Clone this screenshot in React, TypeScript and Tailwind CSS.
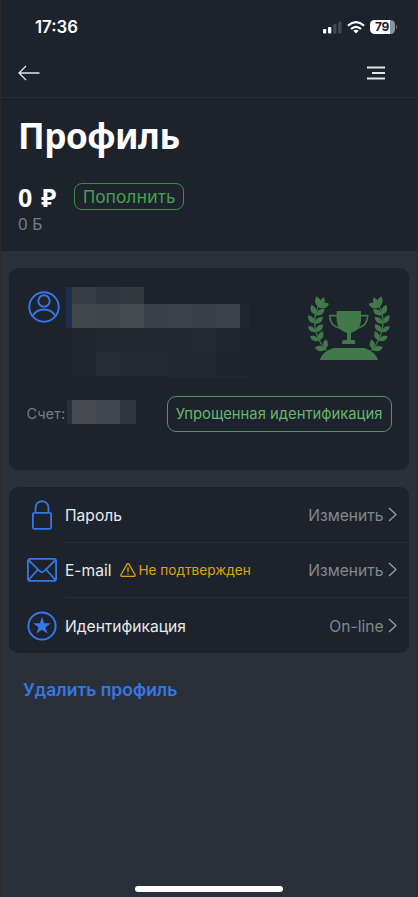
import React from 'react'

interface MenuItemProps {
    icon: React.ReactNode,
    title: string,
    action: string,
    warning?: string,
    last?: boolean,
}

// base x, base y, tip x, tip y
const leaves = [
    [90, 84, 79, 49],
    [91, 80, 102, 52],
    [88, 83, 117, 71],
    [76, 104, 64, 74],
    [77, 106, 104, 88],
    [73, 130, 54, 106],
    [74, 131, 99, 111],
    [77, 156, 54, 139],
    [77, 156, 99, 133],
    [86, 182, 60, 169],
    [86, 182, 98, 153],
    [106, 209, 74, 202],
    [105, 208, 108, 178],
]

const leafPath = ([x1, y1, x2, y2]: number[]) => {
    const dx = x2 - x1
    const dy = y2 - y1
    const mx = x1 + dx * 0.5
    const my = y1 + dy * 0.5
    const w = 0.5
    return `M${x1} ${y1}Q${mx - dy * w} ${my + dx * w} ${x2} ${y2}Q${mx + dy * w} ${my - dx * w} ${x1} ${y1}Z`
}

const Branch = () => (
    <g>
        <path d="M95 62Q72 96 74 132Q78 180 110 212" fill="none" stroke="#42794b" strokeWidth="4" />
        {leaves.map((leaf, i) => <path key={i} d={leafPath(leaf)} />)}
    </g>
)

const Trophy = () => (
    <svg width="84" height="66" viewBox="51 45 252 198" fill="#42794b">
        <Branch />
        <g transform="translate(353 0) scale(-1 1)"><Branch /></g>
        <path d="M140 93H213V122Q211 151 183 159V180H193Q196 181 196 192H156Q156 181 160 180H171V159Q143 151 140 122Z" />
        <path d="M142 107H119Q120 138 151 145M211 107H233Q232 138 201 145" fill="none" stroke="#42794b" strokeWidth="5" />
        <path d="M89 240Q98 214 130 204H223Q255 214 264 240Z" />
    </svg>
)

const UserIcon = () => (
    <svg width="32" height="32" viewBox="0 0 32 32" fill="none" stroke="#3677e6" strokeWidth="1.9">
        <circle cx="16" cy="16" r="14.7" />
        <circle cx="16" cy="10" r="5.7" />
        <path d="M4.5 25C9.500 16.300 22.500 16.300 27.500 25" />
    </svg>
)

const LockIcon = () => (
    <svg width="20" height="30" viewBox="0 0 20 30" fill="none" stroke="#3677e6" strokeWidth="1.8">
        <rect x="0.900" y="12.800" width="18.200" height="16" rx="1.200" />
        <path d="M3.500 12.800V8.200C3.500 -1.100 16.500 -1.100 16.500 8.200V12.800" />
    </svg>
)

const MailIcon = () => (
    <svg width="30" height="24" viewBox="0 0 30 24" fill="none" stroke="#3677e6" strokeWidth="1.8" strokeLinejoin="round">
        <rect x="0.900" y="0.900" width="28.200" height="22" rx="2.200" />
        <path d="M1.500 2L12.500 12.800Q15 15.200 17.500 12.800L28.500 2M1.500 22L11 11.500M28.500 22L19 11.500" />
    </svg>
)

const StarIcon = () => (
    <svg width="30" height="30" viewBox="0 0 30 30">
        <circle cx="15" cy="15" r="13.600" fill="none" stroke="#3677e6" strokeWidth="2" />
        <path d="M15 5.800L17.200 12.200H23.900L18.500 16.200L20.500 22.600L15 18.700L9.500 22.600L11.500 16.200L6.100 12.200H12.800Z" fill="#3677e6" />
    </svg>
)

const MenuItem = ({ icon, title, action, warning, last }: MenuItemProps) => {
    return (
        <div className="flex h-[55.5px]">
            <div className="flex w-14 shrink-0 items-center justify-center pl-[9px]">{icon}</div>
            <div className={`flex grow items-center pr-[12px] ${last ? '' : 'border-b border-[#292f38]'}`}>
                <span className="pt-0.5 text-[15.600px] text-[#e8eaed]">{title}</span>
                {warning && (
                    <span className="ml-2 flex items-center gap-[3px] text-[13.600px] text-[#dda511]">
                        <svg width="16" height="14" viewBox="0 0 16 14" fill="none" stroke="#dda511" strokeWidth="1.300" strokeLinejoin="round">
                            <path d="M7.100 1.100Q8 0 8.900 1.100L15 11.800Q15.500 13.200 14.200 13.300H1.800Q.5 13.200 1 11.800ZM8 4.300V9M8 10.200V11.600" />
                        </svg>
                        <span className="pt-px">{warning}</span>
                    </span>
                )}
                <span className="ml-auto pt-0.5 text-[15.600px] text-[#83878e]">{action}</span>
                <svg className="ml-1" width="9" height="15" viewBox="0 0 9 15" fill="none" stroke="#969a9f" strokeWidth="1.400">
                    <path d="M1 1L8 7.500L1 14" />
                </svg>
            </div>
        </div>
    )
}

// hidden name and contacts
const rows = [
    { height: 'h-[17px]', cells: ['bg-[#363c43]', 'bg-[#31373f]', 'bg-[#33383f]'] },
    { height: 'h-6', cells: ['bg-[#43484f]', 'bg-[#40454c]', 'bg-[#464b52]', 'bg-[#3a4047]', 'bg-[#3b4148]', 'bg-[#383e45]', 'bg-[#3c4249]'] },
    { height: 'h-6', cells: ['bg-[#20262f]', 'bg-[#212730]', 'bg-[#222831]', 'bg-[#222831]', 'bg-[#222831]', 'bg-[#232932]', 'bg-[#20262f]'] },
    { height: 'h-6', cells: ['bg-[#20262f]', 'bg-[#262c35]', 'bg-[#232932]', 'bg-[#242a33]', 'bg-[#222831]', 'bg-[#212730]', 'bg-[#1f252e]'] },
]

const App = () => {
    return (
        <div className="flex h-[897px] w-[418px] flex-col border-x border-[#292929] bg-[#2a303a] font-['Inter',sans-serif]">
            <header className="h-[251px] shrink-0 bg-[#1d232c] text-white">
                <div className="flex h-[54px] items-center pr-5 pl-[34px]">
                    <span className="pt-px text-[16.800px] font-semibold">17:36</span>
                    <svg className="mr-[5px] ml-auto" width="19" height="13" viewBox="0 0 19 13">
                        <rect x="0" y="8" width="3.300" height="4.500" rx="1" fill="#fff" />
                        <rect x="5" y="6" width="3.300" height="6.500" rx="1" fill="#fff" />
                        <rect x="10.200" y="3" width="3.300" height="9.500" rx="1" fill="#434951" />
                        <rect x="15.200" y="0.500" width="3.300" height="12" rx="1" fill="#434951" />
                    </svg>
                    <svg width="18" height="13" viewBox="0 0 18 13" fill="none" stroke="#fff" strokeWidth="2.200">
                        <path d="M1 4.600Q9 -2.200 17 4.600M4 8Q9 3.600 14 8" />
                        <path d="M9 12.500L6.300 9.800Q9 7.800 11.700 9.800Z" fill="#fff" stroke="none" />
                    </svg>
                    <span className="ml-[5px] flex h-[14px] w-[25px] items-center justify-center rounded-[4.500px] bg-linear-to-r from-white from-79% to-[#8e9196] to-79% text-[12px] font-bold tracking-tight text-[#1d232c]">79</span>
                    <span className="ml-px h-1 w-[1.500px] rounded-r bg-[#777b81]" />
                </div>
                <div className="flex h-[44px] items-center justify-between border-b border-[#292f38] pr-8 pb-[5px] pl-[17px]">
                    <svg width="22" height="16" viewBox="0 0 22 16" fill="none" stroke="#e3e5e8" strokeWidth="1.300">
                        <path d="M21.500 8H1M8 1L1 8L8 15" />
                    </svg>
                    <svg width="18" height="14" viewBox="0 0 18 14" stroke="#e3e5e8" strokeWidth="2">
                        <path d="M0 1.500H18M5 7H18M0 12.500H18" />
                    </svg>
                </div>
                <div className="pl-[17px] font-['Noto_Sans',sans-serif]">
                    <h1 className="pt-[14px] text-[35px] leading-[48px] font-bold tracking-[-0.5px]">Профиль</h1>
                    <div className="mt-[22px] flex h-[29px] items-start">
                        <span className="w-14 text-[25px] leading-[31px] font-bold tracking-[1.200px] whitespace-nowrap">0 ₽</span>
                        <button className="mt-px h-[27px] w-[110px] rounded-lg border border-[#3b8d44] text-[17.300px] leading-[25px] text-[#45a24e]">Пополнить</button>
                    </div>
                    <p className="mt-px text-[16.800px] leading-[24px] text-[#777b83]">0 Б</p>
                </div>
            </header>

            <section className="mt-[17px] ml-2 h-[202px] w-[399.500px] shrink-0 rounded-[9px] bg-[#1d232c]">
                <div className="flex h-[128px]">
                    <div className="mt-[23px] mr-[-0.500px] ml-[18.500px]"><UserIcon /></div>
                    <div className="mt-[19px] ml-[7px] flex">
                        <div className="h-[41px] w-1.5 bg-[#1f2d49]" />
                        <div>
                            {rows.map((row, i) => (
                                <div key={i} className={`flex ${row.height}`}>
                                    {row.cells.map((color, j) => <div key={j} className={`w-6 ${color}`} />)}
                                    {i === 1 && <div className="w-[9px] bg-[#20262f]" />}
                                </div>
                            ))}
                            <div className="ml-24 h-[3px] w-[81px] bg-[#1f292f]" />
                        </div>
                    </div>
                    <div className="mt-[27px] ml-auto pr-[18px]"><Trophy /></div>
                </div>
                <div className="flex items-start pl-[17.500px]">
                    <span className="w-[38.500px] pt-[7px] text-[14.600px] leading-[22px] text-[#777b83]">Счет:</span>
                    <div className="mt-1 ml-[2px] flex h-6">
                        <div className="w-[5px] bg-[#292e37]" />
                        <div className="w-6 bg-[#45484f]" />
                        <div className="w-6 bg-[#40464d]" />
                        <div className="w-4 bg-[#31373f]" />
                    </div>
                    <button className="mr-[17px] ml-auto h-9 w-[225px] rounded-[9px] border border-[#52965a] text-[14.800px] whitespace-nowrap text-[#68b46e]">Упрощенная идентификация</button>
                </div>
            </section>

            <section className="mt-[17px] ml-2 h-[166px] w-[399.500px] shrink-0 rounded-[9px] bg-[#1d232c]">
                <MenuItem icon={<LockIcon />} title="Пароль" action="Изменить" />
                <MenuItem icon={<MailIcon />} title="E-mail" action="Изменить" warning="Не подтвержден" />
                <MenuItem icon={<StarIcon />} title="Идентификация" action="On-line" last />
            </section>

            <a className="mt-[25px] ml-[22px] text-[17.500px] leading-6 font-semibold text-[#3677e6]">Удалить профиль</a>
            <div className="mx-auto mt-auto mb-[5px] h-1.5 w-[148px] rounded-full bg-white" />
        </div>
    )
}

export default App
